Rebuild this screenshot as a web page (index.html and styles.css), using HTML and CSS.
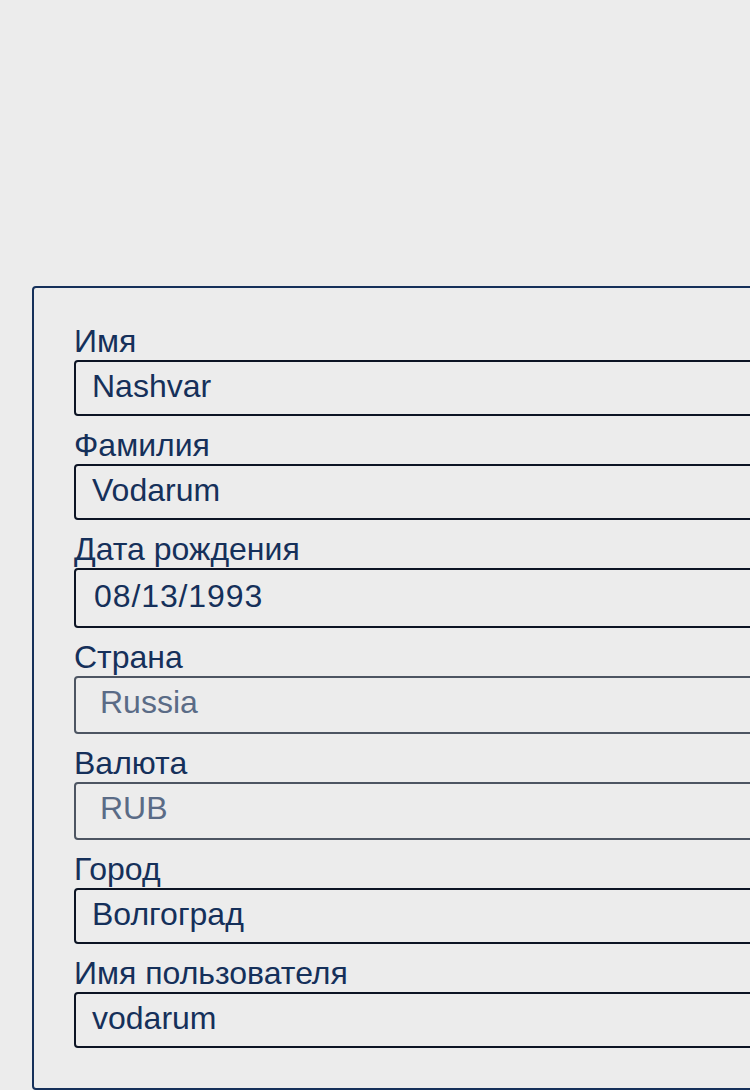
FILE: index.html
```html
<!DOCTYPE html>
<html lang="ru">
<head>
<meta charset="utf-8">
<link rel="stylesheet" href="styles.css">
</head>
<body>
<div class="page">
  <form class="card">
    <div class="field">
      <label class="label">Имя</label>
      <div class="input">Nashvar</div>
    </div>
    <div class="field">
      <label class="label">Фамилия</label>
      <div class="input">Vodarum</div>
    </div>
    <div class="field">
      <label class="label">Дата рождения</label>
      <div class="input date">08/13/1993</div>
    </div>
    <div class="field">
      <label class="label">Страна</label>
      <div class="input disabled">Russia</div>
    </div>
    <div class="field">
      <label class="label">Валюта</label>
      <div class="input disabled">RUB</div>
    </div>
    <div class="field">
      <label class="label">Город</label>
      <div class="input">Волгоград</div>
    </div>
    <div class="field">
      <label class="label">Имя пользователя</label>
      <div class="input">vodarum</div>
    </div>
  </form>
</div>
</body>
</html>
```
FILE: styles.css
```css
html, body {
  margin: 0;
  padding: 0;
  background: #ececec;
  overflow: hidden;
}
body {
  font-family: "Liberation Sans", Arial, sans-serif;
  color: #15305a;
  width: 750px;
  height: 1090px;
}
.page {
  padding: 286px 0 0 32px;
}
.card {
  width: 820px;
  border: 2px solid #15305a;
  border-radius: 4px;
  padding: 40px 40px 40px 40px;
  display: flex;
  flex-direction: column;
  gap: 16px;
  box-sizing: border-box;
}
.field {
  display: flex;
  flex-direction: column;
}
.label {
  font-size: 32px;
  line-height: 26px;
  height: 32px;
  color: #15305a;
}
.input {
  box-sizing: border-box;
  height: 56px;
  border: 2px solid #0c1424;
  border-radius: 4px;
  padding: 0 16px;
  font-size: 32px;
  line-height: 48px;
  color: #15305a;
}
.input.date {
  height: 60px;
  line-height: 52px;
  padding-left: 18px;
  letter-spacing: 0.9px;
}
.input.disabled {
  height: 58px;
  line-height: 48px;
  padding-left: 24px;
  border-color: #4d5562;
  color: #5a6b86;
}
```
